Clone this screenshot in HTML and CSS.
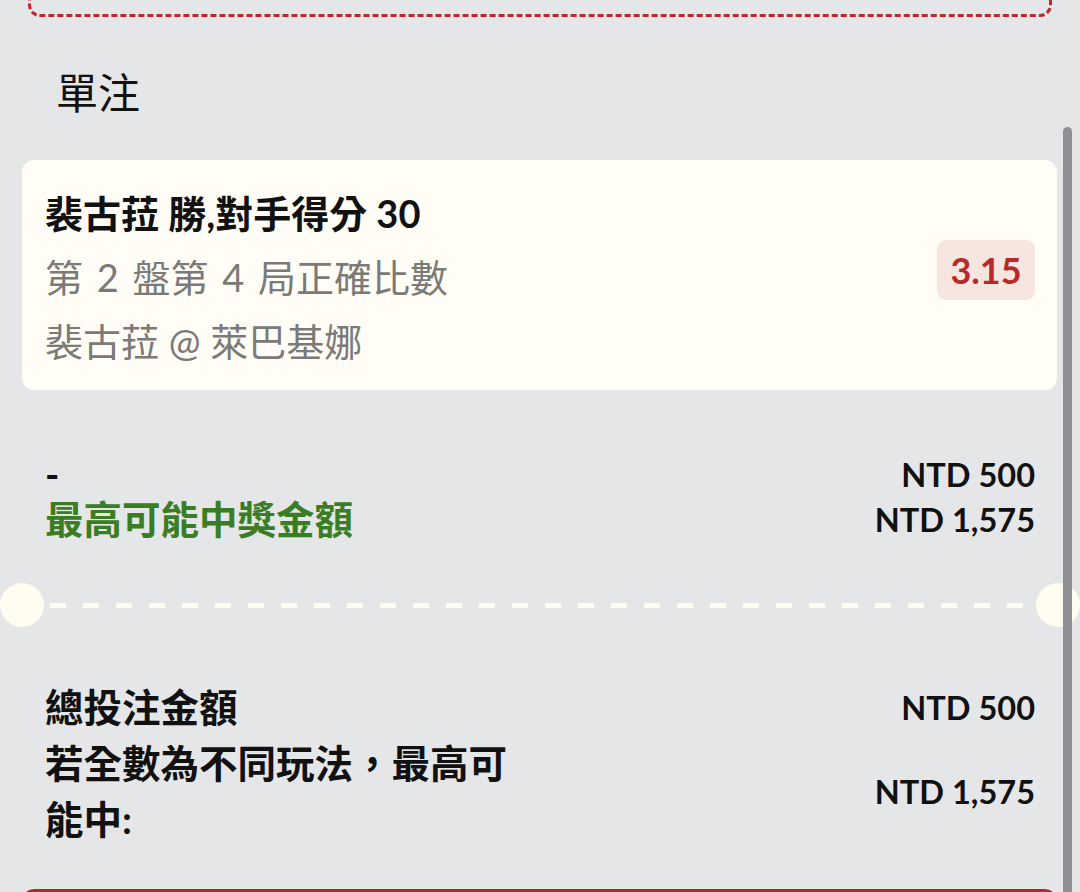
FILE: index.html
```html
<!DOCTYPE html>
<html lang="zh-Hant">
<head>
<meta charset="utf-8">
<title>單注</title>
<link rel="stylesheet" href="styles.css">
</head>
<body>
<div class="page">
  <div class="top-box"></div>
  <h2 class="section-title">單注</h2>

  <div class="bet-card">
    <div class="bet-info">
      <div class="bet-title">裴古菈 勝,對手得分 30</div>
      <div class="bet-sub bet-market">第 2 盤第 4 局正確比數</div>
      <div class="bet-sub">裴古菈 @ 萊巴基娜</div>
    </div>
    <div class="odds">3.15</div>
  </div>

  <div class="stake-row">
    <div class="stake-labels">
      <div class="line">-</div>
      <div class="line green">最高可能中獎金額</div>
    </div>
    <div class="stake-values">
      <div class="line">NTD 500</div>
      <div class="line">NTD 1,575</div>
    </div>
  </div>

  <div class="divider">
    <span class="notch"></span>
    <span class="dashes"></span>
    <span class="notch"></span>
  </div>

  <div class="totals">
    <div class="t-label">總投注金額</div>
    <div class="t-value">NTD 500</div>
    <div class="t-label">若全數為不同玩法，最高可能中:</div>
    <div class="t-value">NTD 1,575</div>
  </div>

  <div class="place-btn"></div>

  <div class="scrollbar"></div>
</div>
</body>
</html>
```

FILE: styles.css
```css
* { box-sizing: border-box; }

html, body {
  margin: 0;
  padding: 0;
  background: #e5e6e8;
  overflow: hidden;
}

body {
  font-family: Lato, "Noto Sans CJK TC", sans-serif;
  color: #111111;
}

.page {
  position: relative;
  width: 1080px;
  height: 892px;
  overflow: hidden;
}

.top-box {
  margin: -40px 28px 0 28px;
  height: 57px;
  border: 3px dashed #c0272d;
  border-radius: 12px;
}

.section-title {
  margin: 0;
  padding: 49px 0 0 56px;
  font-size: 42px;
  line-height: 50px;
  font-weight: 400;
  font-family: "Noto Sans CJK TC", sans-serif;
  color: #111111;
  height: 143px;
}

.bet-card {
  margin: 0 23px 0 22px;
  background: #fffdf5;
  border-radius: 12px;
  padding: 21px 22px 17px 23px;
  display: flex;
  align-items: center;
  justify-content: space-between;
}

.bet-info {
  display: flex;
  flex-direction: column;
}

.bet-title {
  font-size: 38px;
  line-height: 64px;
  font-weight: 700;
  color: #111111;
}

.bet-sub {
  font-size: 38px;
  line-height: 64px;
  font-weight: 400;
  color: #7a7a78;
}

.bet-market {
  word-spacing: 4px;
}

.odds {
  width: 98px;
  height: 60px;
  border-radius: 9px;
  background: #f7e6e0;
  color: #b8292a;
  font-size: 36px;
  font-weight: 700;
  display: flex;
  align-items: center;
  justify-content: center;
  margin-bottom: 14px;
}

.stake-row {
  margin-top: 62px;
  padding: 0 45px;
  display: flex;
  justify-content: space-between;
}

.stake-labels .line,
.stake-values .line {
  line-height: 45px;
  height: 45px;
  font-weight: 700;
}

.stake-labels .line {
  font-size: 38.5px;
}

.stake-values {
  text-align: right;
}

.stake-values .line {
  font-size: 32.5px;
}

.green {
  color: #3b7d24;
}

.divider {
  margin-top: 41px;
  height: 44px;
  display: flex;
  align-items: center;
}

.notch {
  flex: 0 0 44px;
  width: 44px;
  height: 44px;
  border-radius: 50%;
  background: #fffdf0;
}

.dashes {
  flex: 1;
  height: 5px;
  margin: 0 6px;
  background: repeating-linear-gradient(90deg, #fffdf0 0 16px, transparent 16px 33px);
}

.totals {
  margin-top: 52px;
  padding: 0 45px;
  display: grid;
  grid-template-columns: 475px 1fr;
  align-items: center;
}

.t-label {
  font-size: 38.5px;
  line-height: 56px;
  font-weight: 700;
}

.t-value {
  text-align: right;
  font-size: 32.5px;
  font-weight: 700;
}

.place-btn {
  margin: 42px 23px 0 22px;
  height: 80px;
  background: #b22a27;
  border-radius: 12px;
}

.scrollbar {
  position: absolute;
  left: 1063px;
  top: 127px;
  width: 9px;
  height: 800px;
  border-radius: 5px;
  background: #8e8e93;
}
```
